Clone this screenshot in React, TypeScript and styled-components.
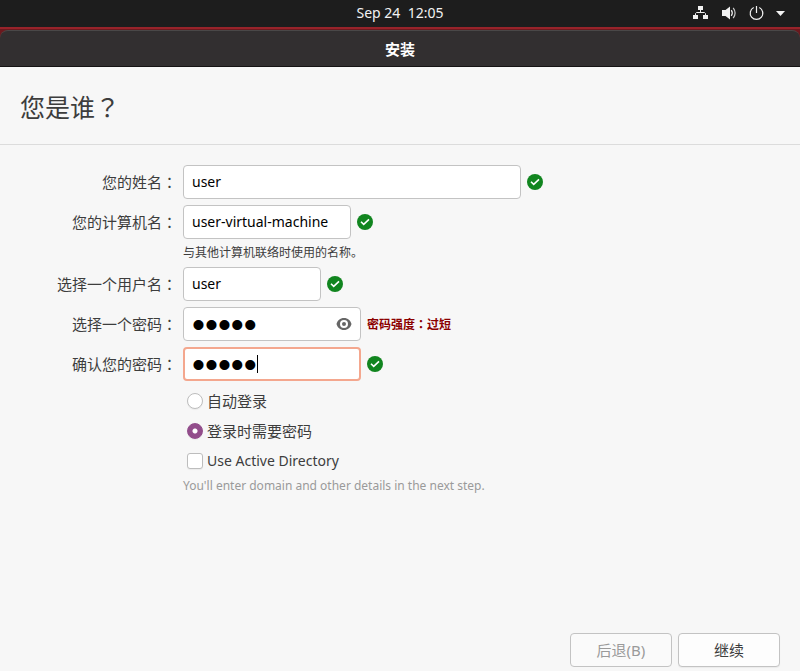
import React, { useState } from "react";
import styled, { createGlobalStyle, css } from "styled-components";

const GlobalStyle = createGlobalStyle`
  *, *::before, *::after { box-sizing: border-box; }
  body {
    margin: 0;
    background: #f7f7f7;
    color: #3d3d3d;
    font-family: "Noto Sans", "Noto Sans CJK SC", sans-serif;
    font-size: 14px;
  }
`;

const Page = styled.div`
  display: flex;
  flex-direction: column;
  min-height: 100vh;
`;

const TopBar = styled.header`
  display: grid;
  grid-template-columns: 1fr auto 1fr;
  align-items: center;
  height: 27px;
  padding-bottom: 2px;
  background: #1d1d1d;
  color: #f2f2f2;
  font-size: 14px;
  line-height: 24px;
`;

const Clock = styled.time`
  grid-column: 2;
  white-space: pre;
`;

const Tray = styled.div`
  display: flex;
  justify-content: flex-end;
  align-items: center;
  gap: 12px;
  padding-right: 14px;

  svg { display: block; }
`;

const Desktop = styled.div`
  padding-top: 3px;
  background: linear-gradient(#98232a 0 2px, #6b191e 2px);
`;

const TitleBar = styled.div`
  display: flex;
  align-items: center;
  justify-content: center;
  height: 37px;
  border-top: 1px solid #4a4848;
  border-bottom: 1px solid #151314;
  border-radius: 8px 8px 0 0;
  background: #322f30;
  color: #fff;
  font-size: 15px;
  font-weight: 700;
`;

const Heading = styled.h1`
  margin: 0;
  padding: 21px 20px 19px;
  border-bottom: 1px solid #dcdcdc;
  font-size: 25px;
  font-weight: 400;
  line-height: 36px;
`;

const Form = styled.form`
  display: flex;
  flex: 1;
  flex-direction: column;
`;

const Fields = styled.div`
  display: grid;
  grid-template-columns: 177px 1fr;
  column-gap: 6px;
  row-gap: 6px;
  padding-top: 20px;
`;

const Label = styled.label`
  align-self: center;
  justify-self: end;
  font-size: 15px;
  line-height: 22px;
`;

const WidePunctuation = styled.span`
  font-family: "Noto Sans CJK TC", sans-serif;
`;

const Control = styled.div`
  display: flex;
  align-items: center;
  gap: 6px;
`;

const InputFrame = styled.div<{ $width: number }>`
  position: relative;
  width: ${(p) => p.$width}px;
`;

const TextInput = styled.input<{ $active?: boolean }>`
  display: block;
  width: 100%;
  height: 34px;
  padding: 0 8px 2px;
  border: 1px solid #c3c3c3;
  border-radius: 4px;
  outline: 0;
  background: #fff;
  color: #000;
  font: 14px "Noto Sans", "Noto Sans CJK SC", sans-serif;

  ${(p) =>
    p.$active &&
    css`
      padding: 0 7px 2px;
      border: 2px solid #f4a78e;
    `}
`;

const SecretInput = styled(TextInput)`
  padding-top: 2px;
  padding-bottom: 0;
  font: 37px "Liberation Sans", sans-serif;
`;

const Caret = styled.span`
  position: absolute;
  top: 8px;
  left: 74px;
  width: 1px;
  height: 18px;
  background: #000;
`;

const RevealButton = styled.button`
  position: absolute;
  top: 9px;
  right: 9px;
  width: 16px;
  height: 16px;
  padding: 0;
  border: 0;
  background: none;

  svg { display: block; }
`;

const Strength = styled.strong`
  color: #8b0000;
  font-size: 12px;
`;

const Hint = styled.p<{ $muted?: boolean }>`
  grid-column: 2;
  margin: 0;
  color: ${(p) => (p.$muted ? "#9a9a9a" : "#3d3d3d")};
  font-size: 12px;
  line-height: 16px;
`;

const Options = styled.div`
  display: flex;
  grid-column: 2;
  flex-direction: column;
  gap: 8px;
  padding: 3px 0 0 4px;
`;

const Option = styled.label`
  display: flex;
  align-items: center;
  align-self: flex-start;
  gap: 4px;
  font-size: 15px;
  line-height: 22px;
`;

const LatinText = styled.span`
  font-size: 14px;
`;

const Mark = styled.input`
  appearance: none;
  width: 16px;
  height: 16px;
  margin: 0;
  border: 1px solid #bdbdbd;
  border-radius: ${(p) => (p.type === "radio" ? "50%" : "3px")};
  background: #fff;
  box-shadow: 0 1px 1px #0000000d;

  &:checked {
    border-color: #924d8b;
    background: radial-gradient(circle, #fff 2px, #924d8b 3px);
  }
`;

const Actions = styled.footer`
  display: flex;
  justify-content: flex-end;
  gap: 6px;
  margin-top: auto;
  padding: 12px 20px 4px;
`;

const ActionButton = styled.button`
  width: 102px;
  height: 34px;
  padding: 0 0 2px;
  border: 1px solid #c3c3c3;
  border-radius: 4px;
  background: #fdfdfd;
  box-shadow: 0 1px 1px #0000000d;
  color: #3d3d3d;
  font: 15px "Noto Sans", "Noto Sans CJK SC", sans-serif;

  &:disabled {
    background: #fafafa;
    box-shadow: none;
    color: #9a9a9a;
  }
`;

const NetworkIcon = () => (
  <svg width="16" height="16" viewBox="0 0 16 16" fill="#f2f2f2" aria-hidden="true">
    <path d="M6 1h5v4H6zM1 10h5v4H1zM11 10h5v4h-5z" />
    <path d="M8.500 5v2.500M3.500 10V8.500l1-1h8l1 1V10" fill="none" stroke="#f2f2f2" />
  </svg>
);

const VolumeIcon = () => (
  <svg width="16" height="16" viewBox="0 0 16 16" fill="none" stroke="#f2f2f2" aria-hidden="true">
    <path d="M2 5h3.500L10 1.500v13L5.500 11H2z" fill="#f2f2f2" stroke="none" />
    <path d="M11.300 5.200q2 2.800 0 5.600" strokeWidth="1.200" />
    <path d="M13.200 2.800q3.800 5.200 0 10.400" strokeWidth="1.200" opacity=".8" />
  </svg>
);

const PowerIcon = () => (
  <svg width="16" height="16" viewBox="0 0 16 16" fill="none" stroke="#f2f2f2" strokeWidth="1.200" aria-hidden="true">
    <path d="M8.500 1v7M5.700 2.500a6.300 6.300 0 1 0 5.600 0" />
  </svg>
);

const ArrowIcon = () => (
  <svg width="10" height="16" viewBox="0 0 10 16" aria-hidden="true">
    <path d="M0 6h9L4.500 11z" fill="#f2f2f2" />
  </svg>
);

const CheckIcon = () => (
  <svg width="16" height="16" viewBox="0 0 16 16" role="img" aria-label="有效">
    <circle cx="8" cy="8" r="8" fill="#11851f" />
    <path d="m4 7.700 2.700 2.700L12 5.300" fill="none" stroke="#fff" strokeWidth="1.600" />
  </svg>
);

const EyeIcon = () => (
  <svg width="16" height="16" viewBox="0 0 16 16" aria-hidden="true">
    <path
      d="M8 2C4 2 1.500 4.500.500 8c1 3.500 3.500 6 7.500 6s6.500-2.500 7.500-6C14.500 4.500 12 2 8 2zm0 2a4 4 0 1 1 0 8 4 4 0 0 1 0-8zm0 2a2 2 0 1 0 0 4 2 2 0 0 0 0-4z"
      fill="#666"
      fillRule="evenodd"
    />
  </svg>
);

interface FieldProps {
  id: string;
  label: string;
  value: string;
  width: number;
  secret?: boolean;
  active?: boolean;
  inner?: React.ReactNode;
  children?: React.ReactNode;
}

function Field({ id, label, value, width, secret, active, inner, children }: FieldProps) {
  const Input = secret ? SecretInput : TextInput;
  return (
    <>
      <Label htmlFor={id}>
        {label}
        <WidePunctuation lang="zh-Hant">：</WidePunctuation>
      </Label>
      <Control>
        <InputFrame $width={width}>
          <Input id={id} type={secret ? "password" : "text"} defaultValue={value} $active={active} />
          {inner}
        </InputFrame>
        {children}
      </Control>
    </>
  );
}

export default function App() {
  const [login, setLogin] = useState("password");
  return (
    <Page lang="zh-CN">
      <GlobalStyle />
      <TopBar>
        <Clock>{"Sep 24  12:05"}</Clock>
        <Tray>
          <NetworkIcon />
          <VolumeIcon />
          <PowerIcon />
          <ArrowIcon />
        </Tray>
      </TopBar>
      <Desktop>
        <TitleBar>安装</TitleBar>
      </Desktop>
      <Heading>
        您是谁<WidePunctuation lang="zh-Hant">？</WidePunctuation>
      </Heading>
      <Form onSubmit={(e) => e.preventDefault()}>
        <Fields>
          <Field id="name" label="您的姓名" value="user" width={338}>
            <CheckIcon />
          </Field>
          <Field id="host" label="您的计算机名" value="user-virtual-machine" width={168}>
            <CheckIcon />
          </Field>
          <Hint>与其他计算机联络时使用的名称。</Hint>
          <Field id="account" label="选择一个用户名" value="user" width={138}>
            <CheckIcon />
          </Field>
          <Field
            id="secret"
            label="选择一个密码"
            value="12345"
            width={178}
            secret
            inner={
              <RevealButton type="button" aria-label="显示密码">
                <EyeIcon />
              </RevealButton>
            }
          >
            <Strength>
              密码强度<WidePunctuation lang="zh-Hant">：</WidePunctuation>过短
            </Strength>
          </Field>
          <Field id="confirm" label="确认您的密码" value="12345" width={178} secret active inner={<Caret />}>
            <CheckIcon />
          </Field>
          <Options>
            <Option>
              <Mark type="radio" name="login" checked={login === "auto"} onChange={() => setLogin("auto")} />
              自动登录
            </Option>
            <Option>
              <Mark type="radio" name="login" checked={login === "password"} onChange={() => setLogin("password")} />
              登录时需要密码
            </Option>
            <Option>
              <Mark type="checkbox" />
              <LatinText>Use Active Directory</LatinText>
            </Option>
          </Options>
          <Hint $muted>You'll enter domain and other details in the next step.</Hint>
        </Fields>
        <Actions>
          <ActionButton type="button" disabled>
            后退(B)
          </ActionButton>
          <ActionButton type="submit">继续</ActionButton>
        </Actions>
      </Form>
    </Page>
  );
}
